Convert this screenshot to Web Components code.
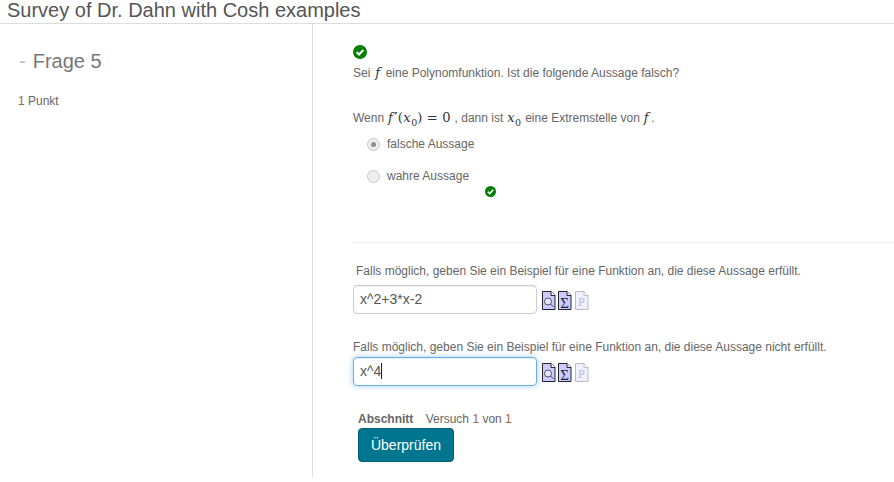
<!DOCTYPE html>
<html lang="de">
<head>
<meta charset="utf-8">
<title>Survey of Dr. Dahn with Cosh examples</title>
<style>
  html, body { margin: 0; height: 100%; background: #fff; overflow: hidden; }
  body { font: 12px/18px "Liberation Sans", Arial, sans-serif; color: #666; }
</style>
</head>
<body>

<template id="check-template">
  <style>
    :host { display: inline-block; width: var(--size, 14px); height: var(--size, 14px); line-height: 0; }
    svg { width: 100%; height: 100%; display: block; }
  </style>
  <svg viewBox="0 0 14 14"><circle cx="7" cy="7" r="7" fill="#008000"/><path d="M3.6 7.3l2.4 2.3 4.4-4.6" fill="none" stroke="#fff" stroke-width="2.1"/></svg>
</template>

<template id="math-template">
  <style>
    :host { font-family: "DejaVu Serif", "Liberation Serif", serif; font-size: 13px; color: #333; }
    ::slotted(i) { font-style: italic; margin: 0 .5px; }
    ::slotted(i.wide) { margin: 0 1.5px; }
    ::slotted(i.end) { margin-right: -1.5px; }
    ::slotted(sub) { font-size: 9.500px; line-height: 0; }
    ::slotted(.prime) { font-weight: bold; margin-left: 1px; }
    ::slotted(.rel) { margin: 0 4.500px; }
  </style>
  <slot></slot>
</template>

<template id="radio-template">
  <style>
    :host { display: flex; align-items: center; gap: 7px; height: 18px; padding-left: 14px; }
    i { box-sizing: border-box; width: 13px; height: 13px; border-radius: 50%; border: 1px solid #c9c9c9; background: #eee; display: flex; align-items: center; justify-content: center; }
    b { width: 5px; height: 5px; border-radius: 50%; background: #8f8f8f; display: none; }
    :host([checked]) b { display: block; }
  </style>
  <i><b></b></i><span><slot></slot></span>
</template>

<template id="doc-icon-template">
  <style>
    :host { display: inline-block; width: 14px; height: 19px; line-height: 0; }
    svg { display: block; }
    :host([disabled]) svg { opacity: .3; }
  </style>
  <svg width="14" height="19" viewBox="0 0 14 19">
    <path d="M.5 .5h8.500l4 4v14h-12.500z" fill="#ccccff" stroke="#223"/>
    <path d="M9 .5v4h4" fill="#fff" stroke="#223"/>
    <g id="glyph"></g>
  </svg>
</template>

<template id="answer-template">
  <style>
    :host { display: block; }
    .row { display: flex; align-items: center; gap: 5px; margin-top: var(--row-gap, 5px); }
    .box { box-sizing: border-box; width: 184px; height: 29px; border: 1px solid #ccc; border-radius: 4px; padding: 0 6px; font-size: 14px; line-height: 27px; color: #555; box-shadow: inset 0 1px 1px rgba(0,0,0,.075); }
    :host([focused]) .box { border-color: #66afe9; box-shadow: inset 0 1px 1px rgba(0,0,0,.075), 0 0 6px rgba(102,175,233,.6); }
    .caret { display: none; border-left: 1px solid #222; }
    :host([focused]) .caret { display: inline; }
    .icons { display: flex; gap: 2px; margin-top: 2px; }
    .icons doc-icon:last-child { margin-left: 1px; }
    .label { padding-left: var(--label-indent, 0); }
  </style>
  <div class="label"><slot name="label"></slot></div>
  <div class="row">
    <div class="box"><span id="value"></span><span class="caret"></span></div>
    <div class="icons">
      <doc-icon kind="zoom"></doc-icon>
      <doc-icon kind="sigma"></doc-icon>
      <doc-icon kind="p" disabled></doc-icon>
    </div>
  </div>
</template>

<template id="question-template">
  <style>
    :host { display: flex; height: 453px; }
    aside { box-sizing: border-box; width: 313px; flex: none; border-right: 1px solid #ddd; padding: 23px 0 0 18px; }
    h2 { margin: 0; font-size: 20px; line-height: 28px; font-weight: 400; color: #777; display: flex; gap: 7px; }
    h2 span { color: #bbb; font-size: 20px; margin-left: 1px; }
    .points { margin-top: 17px; }
    main { flex: 1; min-width: 0; padding: 21px 0 0 40px; }
  </style>
  <aside>
    <h2><span>-</span><slot name="title"></slot></h2>
    <div class="points"><slot name="points"></slot></div>
  </aside>
  <main><slot></slot></main>
</template>

<survey-header>Survey of Dr. Dahn with Cosh examples</survey-header>

<quiz-question>
  <span slot="title">Frage 5</span>
  <span slot="points"><span style="color:#9a6a3a">1</span> Punkt</span>

  <check-mark style="--size:14px;display:block"></check-mark>
  <div style="margin-top:5px">Sei <math-text><i class="wide">f</i></math-text> eine Polynomfunktion. Ist die folgende Aussage falsch?</div>
  <div style="margin-top:27px">Wenn <math-text><i>f</i><span class="prime">′</span>(<i>x</i><sub>0</sub>)<span class="rel">=</span>0</math-text>, dann ist <math-text><i>x</i><sub>0</sub></math-text> eine Extremstelle von <math-text><i class="end">f</i></math-text>.</div>
  <radio-option checked style="margin-top:8px">falsche Aussage</radio-option>
  <radio-option style="margin-top:14px">wahre Aussage</radio-option>
  <check-mark style="--size:11px;display:block;margin:1px 0 0 132px"></check-mark>
  <div style="border-top:1px solid #eee;margin-top:45px"></div>
  <answer-field value="x^2+3*x-2" style="--label-indent:3px;margin-top:19px"><span slot="label">Falls möglich, geben Sie ein Beispiel für eine Funktion an, die diese Aussage erfüllt.</span></answer-field>
  <answer-field value="x^4" focused style="--row-gap:1px;margin-top:24px"><span slot="label">Falls möglich, geben Sie ein Beispiel für eine Funktion an, die diese Aussage nicht erfüllt.</span></answer-field>
  <submit-block style="margin-top:24px"></submit-block>
</quiz-question>

<script>
  // clone a template into an open shadow root
  function stamp(el, id) {
    var shadow = el.attachShadow({mode: 'open'});
    shadow.appendChild(document.getElementById(id).content.cloneNode(true));
    return shadow;
  }

  class SurveyHeader extends HTMLElement {
    constructor() {
      super();
      this.attachShadow({mode: 'open'}).innerHTML =
        '<style>:host{display:block;box-sizing:border-box;height:24px;border-bottom:1px solid #ddd;padding-left:7px;font-size:20px;line-height:20px;color:#555;overflow:hidden}</style><slot></slot>';
    }
  }

  class CheckMark extends HTMLElement {
    constructor() { super(); stamp(this, 'check-template'); }
  }

  class MathText extends HTMLElement {
    constructor() { super(); stamp(this, 'math-template'); }
  }

  class RadioOption extends HTMLElement {
    constructor() { super(); stamp(this, 'radio-template'); }
  }

  class DocIcon extends HTMLElement {
    constructor() { super(); this.shadow = stamp(this, 'doc-icon-template'); }
    connectedCallback() {
      var glyph = this.shadow.querySelector('#glyph');
      var kind = this.getAttribute('kind');
      if (kind == 'zoom') {
        glyph.innerHTML = '<circle cx="6" cy="10.500" r="3.500" fill="#e6e6ff" stroke="#445" stroke-width=".9"/><path d="M8.500 13l3 3" stroke="#445"/>';
      } else if (kind == 'sigma') {
        glyph.innerHTML = '<text x="6.500" y="17" font-family="Liberation Serif, serif" font-size="15" text-anchor="middle" fill="#223">Σ</text>';
      } else {
        glyph.innerHTML = '<text x="6.500" y="15" font-family="Liberation Serif, serif" font-size="12" text-anchor="middle" fill="#223">P</text>';
      }
    }
  }

  class AnswerField extends HTMLElement {
    constructor() { super(); this.shadow = stamp(this, 'answer-template'); }
    connectedCallback() { this.shadow.querySelector('#value').textContent = this.getAttribute('value'); }
  }

  class SubmitBlock extends HTMLElement {
    constructor() {
      super();
      this.attachShadow({mode: 'open'}).innerHTML =
        '<style>:host{display:block;padding-left:5px}' +
        'b{margin-right:9px} i{font-style:normal;color:#9a6a3a}' +
        'button{display:block;box-sizing:border-box;width:96px;height:34px;background:#00758f;border:1px solid #005f75;border-radius:4px;color:#fff;font:14px "Liberation Sans",Arial,sans-serif;padding:0}</style>' +
        '<div><b>Abschnitt</b> Versuch <i>1</i> von <i>1</i></div><button>Überprüfen</button>';
    }
  }

  class QuizQuestion extends HTMLElement {
    constructor() { super(); stamp(this, 'question-template'); }
  }

  customElements.define('survey-header', SurveyHeader);
  customElements.define('check-mark', CheckMark);
  customElements.define('math-text', MathText);
  customElements.define('radio-option', RadioOption);
  customElements.define('doc-icon', DocIcon);
  customElements.define('answer-field', AnswerField);
  customElements.define('submit-block', SubmitBlock);
  customElements.define('quiz-question', QuizQuestion);
</script>
</body>
</html>
